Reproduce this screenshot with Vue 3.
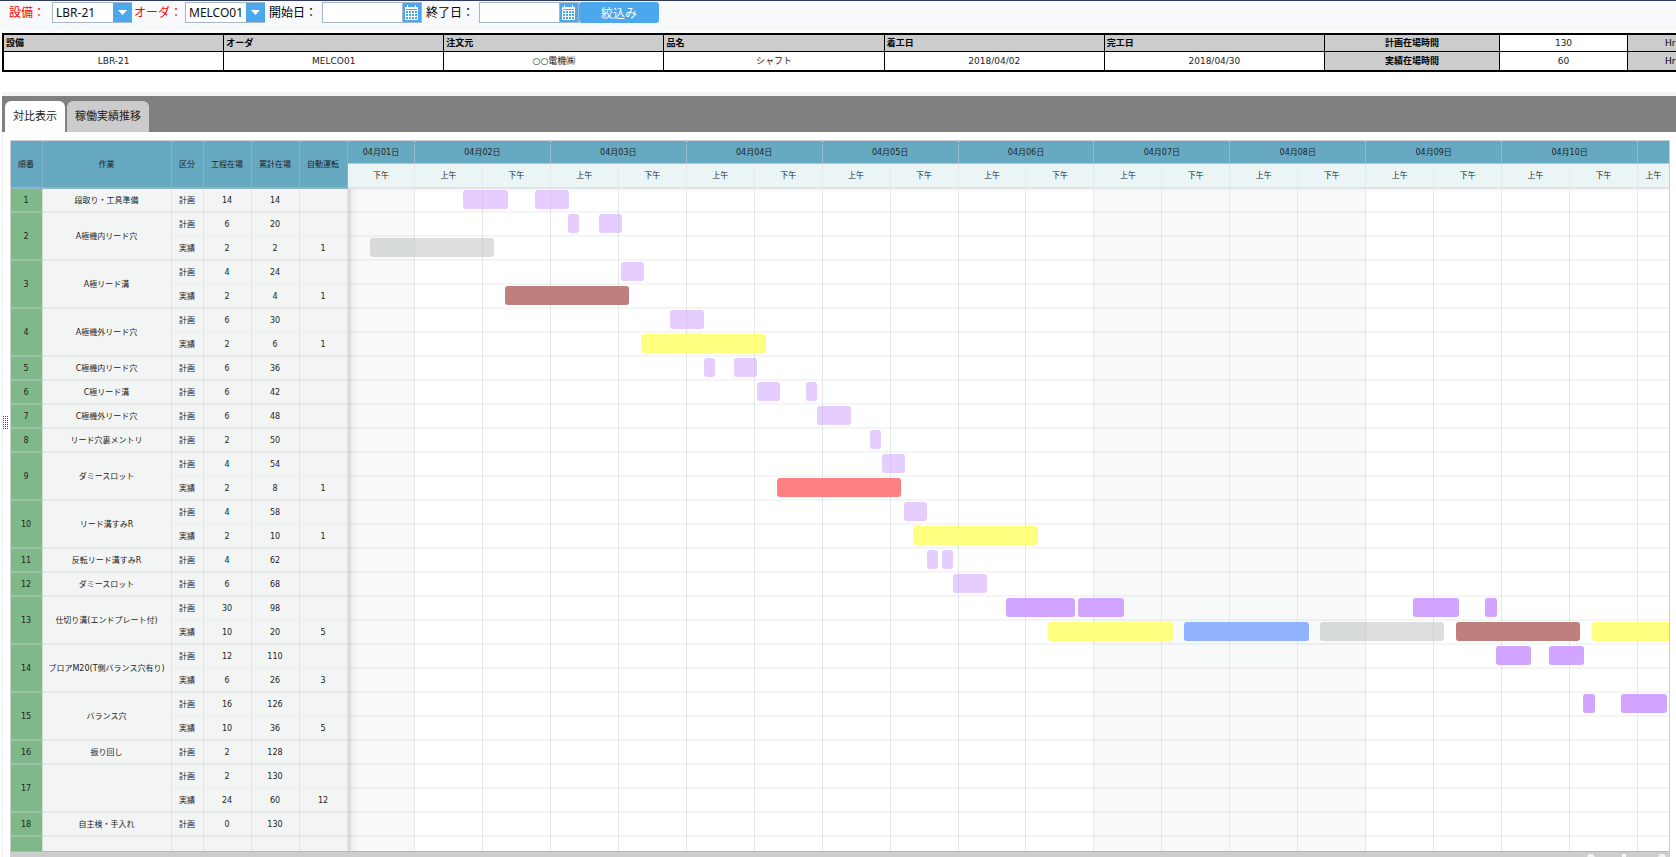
<script setup>
import { ref } from 'vue'

const equipment = ref('LBR-21')
const order = ref('MELCO01')
const startDate = ref('')
const endDate = ref('')
const activeTab = ref(0)
const tabs = ['対比表示', '稼働実績推移']

const days = ['04月02日', '04月03日', '04月04日', '04月05日', '04月06日', '04月07日', '04月08日', '04月09日', '04月10日']

// Columns of half a day; the first is the afternoon of 1 April.
const halves = Array.from({ length: 20 }, (_, i) => ({
  label: i % 2 ? '上午' : '下午',
  off: i === 0 || (i >= 11 && i <= 14)
}))

// Length of the visible time span, in the units that the bars use (68 to half a day).
const SPAN = 1321
const pct = (v) => (v / SPAN) * 100 + '%'

// Each line: kind, hours in process, running total, unattended runs, bars [start, length, colour]
const P = 'plan', D = 'deep', G = 'grey', B = 'brown', Y = 'yellow', R = 'red', U = 'blue'
const tasks = [
  { no: 1, name: '段取り・工具準備', lines: [['計画', 14, 14, '', [[115, 45, P], [187, 34, P]]]] },
  { no: 2, name: 'A極機内リード穴', lines: [['計画', 6, 20, '', [[220, 11, P], [251, 23, P]]], ['実績', 2, 2, 1, [[22, 124, G]]]] },
  { no: 3, name: 'A極リード溝', lines: [['計画', 4, 24, '', [[273, 23, P]]], ['実績', 2, 4, 1, [[157, 124, B]]]] },
  { no: 4, name: 'A極機外リード穴', lines: [['計画', 6, 30, '', [[322, 34, P]]], ['実績', 2, 6, 1, [[293, 125, Y]]]] },
  { no: 5, name: 'C極機内リード穴', lines: [['計画', 6, 36, '', [[356, 11, P], [386, 23, P]]]] },
  { no: 6, name: 'C極リード溝', lines: [['計画', 6, 42, '', [[409, 23, P], [458, 11, P]]]] },
  { no: 7, name: 'C極機外リード穴', lines: [['計画', 6, 48, '', [[469, 34, P]]]] },
  { no: 8, name: 'リード穴裏メントリ', lines: [['計画', 2, 50, '', [[522, 11, P]]]] },
  { no: 9, name: 'ダミースロット', lines: [['計画', 4, 54, '', [[534, 23, P]]], ['実績', 2, 8, 1, [[429, 124, R]]]] },
  { no: 10, name: 'リード溝すみR', lines: [['計画', 4, 58, '', [[556, 23, P]]], ['実績', 2, 10, 1, [[565, 125, Y]]]] },
  { no: 11, name: '反転リード溝すみR', lines: [['計画', 4, 62, '', [[579, 11, P], [594, 11, P]]]] },
  { no: 12, name: 'ダミースロット', lines: [['計画', 6, 68, '', [[605, 34, P]]]] },
  { no: 13, name: '仕切り溝(エンドプレート付)', lines: [
    ['計画', 30, 98, '', [[658, 69, D], [730, 46, D], [1065, 46, D], [1137, 12, D]]],
    ['実績', 10, 20, 5, [[700, 125, Y], [836, 125, U], [972, 124, G], [1108, 124, B], [1244, 124, Y]]]] },
  { no: 14, name: 'ブロアM20(T側バランス穴有り)', lines: [['計画', 12, 110, '', [[1148, 35, D], [1201, 35, D]]], ['実績', 6, 26, 3, []]] },
  { no: 15, name: 'バランス穴', lines: [['計画', 16, 126, '', [[1235, 12, D], [1273, 46, D]]], ['実績', 10, 36, 5, []]] },
  { no: 16, name: '振り回し', lines: [['計画', 2, 128, '', []]] },
  { no: 17, name: '', lines: [['計画', 2, 130, '', []], ['実績', 24, 60, 12, []]] },
  { no: 18, name: '自主検・手入れ', lines: [['計画', 0, 130, '', []]] },
  { no: '', name: '', lines: [['', '', '', '', []]] }
]
const flat = tasks.flatMap((t) => t.lines.map((line, i) => ({ t, line, i, last: i === t.lines.length - 1 })))
</script>

<template>
  <div class="page">
    <form class="toolbar" @submit.prevent>
      <label class="need" for="equipment">設備：</label>
      <span class="pick first">
        <select id="equipment" v-model="equipment"><option>LBR-21</option></select>
        <svg viewBox="0 0 19 19"><path d="M5 7h9l-4.500 5z" fill="#fff" /></svg>
      </span>
      <label class="need" for="order">オーダ：</label>
      <span class="pick">
        <select id="order" v-model="order"><option>MELCO01</option></select>
        <svg viewBox="0 0 19 19"><path d="M5 7h9l-4.500 5z" fill="#fff" /></svg>
      </span>
      <label class="when" for="start">開始日：</label>
      <span class="date">
        <input id="start" v-model="startDate" type="text" />
        <button type="button" aria-label="開始日を選択">
          <svg viewBox="0 0 18 19"><path d="M2.500 4.500h12v12h-12zM2.500 5.500h12M2.500 7.500h12M2.500 10.500h12M2.500 13.500h12M5.500 7.500v9M8.500 7.500v9M11.500 7.500v9M4.500 2v3M12.500 2v3" fill="none" stroke="#fff" /></svg>
        </button>
      </span>
      <label class="when" for="end">終了日：</label>
      <span class="date">
        <input id="end" v-model="endDate" type="text" />
        <button type="button" aria-label="終了日を選択">
          <svg viewBox="0 0 18 19"><path d="M2.500 4.500h12v12h-12zM2.500 5.500h12M2.500 7.500h12M2.500 10.500h12M2.500 13.500h12M5.500 7.500v9M8.500 7.500v9M11.500 7.500v9M4.500 2v3M12.500 2v3" fill="none" stroke="#fff" /></svg>
        </button>
      </span>
      <button class="filter" type="submit">絞込み</button>
    </form>

    <table class="info">
      <colgroup>
        <col /><col /><col /><col /><col /><col />
        <col class="c-label" /><col class="c-value" /><col class="c-unit" />
      </colgroup>
      <tbody>
        <tr>
          <th>設備</th><th>オーダ</th><th>注文元</th><th>品名</th><th>着工日</th><th>完工日</th>
          <th class="mid">計画在場時間</th><td>130</td><th class="unit">Hr</th>
        </tr>
        <tr>
          <td>LBR-21</td><td>MELCO01</td><td>○○電機㈱</td><td>シャフト</td><td>2018/04/02</td><td>2018/04/30</td>
          <th class="mid">実績在場時間</th><td>60</td><th class="unit">Hr</th>
        </tr>
      </tbody>
    </table>

    <nav class="tabs">
      <button v-for="(tab, i) in tabs" :key="tab" type="button" :class="{ on: i === activeTab }" @click="activeTab = i">{{ tab }}</button>
    </nav>

    <main class="panel">
      <svg class="grip" viewBox="0 0 5 13">
        <path d="M0 .5h5M0 2.500h5M0 4.500h5M0 6.500h5M0 8.500h5M0 10.500h5M0 12.500h5" stroke="#3d4c68" stroke-dasharray="1 1" />
      </svg>
      <div class="gantt">
        <div class="view">
          <table class="list">
            <colgroup><col class="w-no" /><col class="w-name" /><col class="w-kind" /><col /><col /><col /></colgroup>
            <thead>
              <tr><th>順番</th><th>作業</th><th>区分</th><th>工程在場</th><th>累計在場</th><th>自動運転</th></tr>
            </thead>
            <tbody>
              <tr v-for="(f, n) in flat" :key="n" :class="{ last: f.last }">
                <th v-if="f.i === 0" class="no" :rowspan="f.t.lines.length">{{ f.t.no }}</th>
                <td v-if="f.i === 0" class="name" :rowspan="f.t.lines.length">{{ f.t.name }}</td>
                <td>{{ f.line[0] }}</td><td>{{ f.line[1] }}</td><td>{{ f.line[2] }}</td><td>{{ f.line[3] }}</td>
              </tr>
            </tbody>
          </table>
          <section class="chart">
            <div class="scale days">
              <span>04月01日</span>
              <span v-for="d in days" :key="d" class="day">{{ d }}</span>
              <span></span>
            </div>
            <div class="scale halves">
              <span v-for="(h, i) in halves" :key="i">{{ h.label }}</span>
            </div>
            <div class="body">
              <div class="scale grid">
                <i v-for="(h, i) in halves" :key="i" :class="{ off: h.off }"></i>
              </div>
              <div v-for="(f, n) in flat" :key="n" class="lane">
                <b v-for="(bar, k) in f.line[4]" :key="k" :class="bar[2]" :style="{ left: pct(bar[0]), width: pct(bar[1]) }"></b>
              </div>
            </div>
          </section>
        </div>
        <div class="scrollbar">
          <svg viewBox="0 0 80 4">
            <path d="M0 4l2-3h4l2 3zM35 4V1h4v3zM71 4l2-3h4l2 3z" fill="#f2f4f4" />
          </svg>
        </div>
      </div>
    </main>
  </div>
</template>

<style>
body { margin: 0; background: #fff; }
</style>

<style scoped>
.page {
  display: flex;
  flex-direction: column;
  height: 100vh;
  overflow: hidden;
  color: #222;
  font-family: "DejaVu Sans", "Noto Sans CJK JP", sans-serif;
}
.page * { box-sizing: border-box; }

.toolbar {
  display: flex;
  flex: none;
  align-items: flex-start;
  height: 31px;
  padding: 1px 0 0 9px;
  border-top: 1px solid #2f3b5e;
  background: #f7f9fb;
  font: 12px/20px "Noto Sans", "Noto Sans CJK JP", sans-serif;
  color: #000;
}
.toolbar label { flex: none; width: 43px; line-height: 22px; white-space: nowrap; }
.toolbar .need { color: #f00; }
.toolbar .first { margin-right: 2px; }
.toolbar .first ~ .need { width: 51px; }
.toolbar .first ~ .when { width: 53px; margin-left: 4px; }
.pick { position: relative; flex: none; width: 80px; height: 21px; }
.pick select {
  width: 100%;
  height: 100%;
  padding: 0 20px 0 3px;
  border: 1px solid #a5b8cb;
  border-radius: 0;
  background: #fff;
  color: #111;
  font: inherit;
  appearance: none;
}
.pick svg {
  position: absolute;
  top: 1px;
  right: 0;
  width: 19px;
  height: 19px;
  background: #4ba8ec;
  pointer-events: none;
}
.date { display: flex; flex: none; width: 100px; height: 21px; }
.date input { width: 81px; border: 1px solid #a5b8cb; background: #fff; font: inherit; }
.date button { width: 19px; padding: 0; border: 1px solid #a5b8cb; border-left: 0; background: #4ba8ec; }
.date svg { display: block; width: 18px; height: 19px; }
.filter {
  flex: none;
  width: 80px;
  height: 21px;
  padding: 2px 0 0;
  border: 0;
  border-radius: 3px;
  background: #4ba8ec;
  color: #fff;
  font: inherit;
}

.info {
  flex: none;
  width: calc(100% - 2px);
  margin: 2px 0 0 2px;
  border: 2px solid #000;
  border-right: 0;
  border-collapse: separate;
  border-spacing: 0;
  table-layout: fixed;
  font-size: 9px;
  line-height: 14px;
  white-space: nowrap;
}
.c-label { width: 175px; }
.c-value { width: 128px; }
.c-unit { width: 48px; }
.info th, .info td { height: 18px; padding: 0 2px; border-right: 1px solid #000; text-align: center; }
.info tr:first-child > * { height: 17px; border-bottom: 1px solid #000; }
.info th { background: #ccc; color: #000; text-align: left; }
.info .mid { text-align: center; }
.info .unit { padding-left: 37px; border-right: 0; padding-right: 0; font-weight: 400; }

.tabs {
  display: flex;
  flex: none;
  gap: 2px;
  height: 40px;
  margin: 20px 0 0 2px;
  padding: 5px 3px 0;
  border-top: 4px solid #f3f4f5;
  background: #808080;
}
.tabs button {
  padding: 0 8px 3px;
  border: 0;
  border-radius: 6px 6px 0 0;
  background: #ccc;
  color: #222;
  font: 11px/28px "Noto Sans CJK JP", sans-serif;
}
.tabs .on { background: #fff; }

.panel {
  position: relative;
  display: flex;
  flex: 1;
  min-height: 0;
  margin-left: 2px;
  padding: 8px 6px 0 7px;
  border-left: 1px solid #eee;
}
.grip { position: absolute; left: 0; top: 284px; width: 5px; height: 13px; }
.gantt {
  display: flex;
  flex: 1;
  flex-direction: column;
  min-width: 0;
  border: 1px solid #ccc;
  border-bottom: 0;
}
.view { display: flex; flex: 1; align-items: flex-start; min-height: 0; overflow: hidden; font-size: 8px; line-height: 12px; }
.scrollbar { display: flex; flex: none; justify-content: flex-end; height: 6px; padding: 1px 2px 0 0; border-top: 1px solid #b5b5b5; background: #cdcdcd; }
.scrollbar svg { width: 80px; height: 4px; }

.list {
  flex: none;
  width: 337px;
  border-spacing: 0;
  table-layout: fixed;
  text-align: center;
  white-space: nowrap;
}
.w-no { width: 32px; }
.w-name { width: 129px; }
.w-kind { width: 32px; }
.list th, .list td { height: 24px; padding: 1px 1px 0 0; font-weight: 400; }
.list thead th {
  height: 48px;
  border-right: 1px dotted #8fc0d2;
  border-bottom: 2px solid #8fb6c2;
  background: #66a9c1;
}
.list tbody td {
  border-right: 1px solid #e1e3e3;
  border-bottom: 2px solid #eff1f1;
  background: #f3f5f5;
}
.list tbody .last td, .list tbody .name { border-bottom-color: #e6e8e8; }
.list tbody .no { border-right: 1px solid #d5e0d8; border-bottom: 2px solid #9fbfa5; background: #7fb98a; }

.chart { flex: 1; min-width: 0; overflow: hidden; }
.scale { display: grid; grid-template-columns: 67fr repeat(18, 68fr) 31fr; text-align: center; }
.scale > * { min-width: 0; border-right: 1px solid #e6e9e9; white-space: nowrap; }
.scale > :last-child { border-right: 0; }
.days { height: 23px; border-bottom: 1px solid #b5c8ce; background: #66a9c1; line-height: 24px; }
.days > * { border-right: 1px dotted #a9cedc; }
.days .day { grid-column: span 2; }
.halves { height: 25px; border-bottom: 2px solid #e0e4e4; background: #ebf5f6; line-height: 24px; }
.body { position: relative; box-shadow: inset 3px 0 0 #dcdcdc, inset 7px 0 4px #eee; }
.grid { position: absolute; inset: 0; z-index: -1; }
.grid .off { background: #f7f9fa; }
.lane { position: relative; height: 24px; border-bottom: 2px solid rgba(120, 130, 130, 0.08); }
.lane b { position: absolute; top: 1px; height: 19px; border-radius: 3px; }
.plan { background: rgba(204, 155, 255, 0.5); }
.deep { background: #d1a5ff; }
.grey { background: rgba(185, 189, 187, 0.5); }
.brown { background: #be7f7e; }
.yellow { background: #ffff80; }
.red { background: #ff8080; }
.blue { background: #91b2fc; }
</style>
